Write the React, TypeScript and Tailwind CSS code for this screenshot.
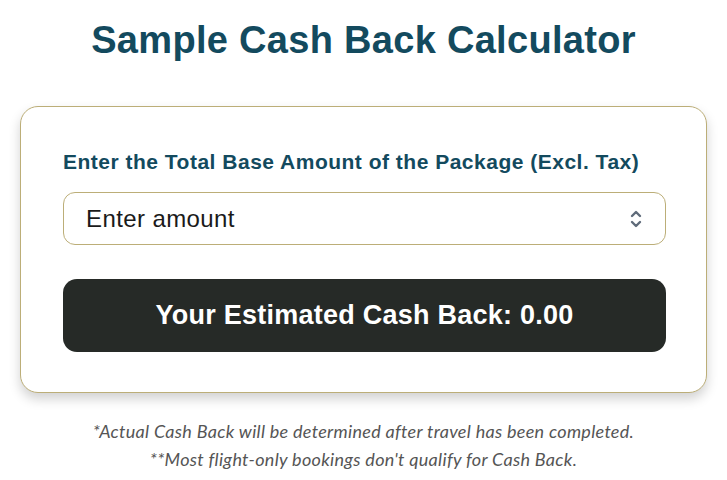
import { useState } from 'react';

export default function App() {
	const [amount, setAmount] = useState('');

	const cashBack = (parseFloat(amount) || 0) * 0;

	return (
		<div className="min-h-screen bg-white flex flex-col items-center px-5 pt-[16px] font-['Liberation_Sans',Arial,sans-serif]">
			<h1 className="text-[38px] leading-[48px] tracking-[0.3px] font-bold text-[#134a5e] text-center">
				Sample Cash Back Calculator
			</h1>

			<div className="mt-[42px] w-full rounded-[18px] border border-[#bcae78] bg-white pl-[42px] pr-[40px] pt-[42px] pb-[40px] shadow-[0_6px_12px_rgba(0,0,0,0.18)]">
				<label className="block text-[21px] leading-[26px] tracking-[0.5px] font-bold text-[#134a5e]">
					Enter the Total Base Amount of the Package (Excl. Tax)
				</label>

				<div className="relative mt-[17px]">
					<input
						type="number"
						value={amount}
						onChange={(e) => setAmount(e.target.value)}
						placeholder="Enter amount"
						className="w-full h-[53px] rounded-[12px] border border-[#bcae78] pl-[22px] pr-10 text-[24px] tracking-[0.4px] text-[#1a1a1a] placeholder:text-[#1a1a1a] outline-none appearance-none [&::-webkit-inner-spin-button]:appearance-none"
					/>
					<svg
						className="absolute right-[24px] top-1/2 -translate-y-1/2"
						width="12"
						height="20"
						viewBox="0 0 12 20"
						fill="none"
						stroke="#5f6b7a"
						strokeWidth="2.4"
						strokeLinecap="round"
						strokeLinejoin="round"
					>
						<path d="M2 7l4-4 4 4" />
						<path d="M2 13l4 4 4-4" />
					</svg>
				</div>

				<div className="mt-[34px] h-[73px] rounded-[14px] bg-[#262a27] flex items-center justify-center">
					<span className="text-white font-bold text-[27px] tracking-[0.25px]">
						Your Estimated Cash Back: {cashBack.toFixed(2)}
					</span>
				</div>
			</div>

			<div className="mt-[24px] text-center italic text-[#555555] text-[18px] leading-[28px] tracking-[0.3px] font-['Lato',sans-serif]">
				<p>*Actual Cash Back will be determined after travel has been completed.</p>
				<p>**Most flight-only bookings don't qualify for Cash Back.</p>
			</div>
		</div>
	);
}
